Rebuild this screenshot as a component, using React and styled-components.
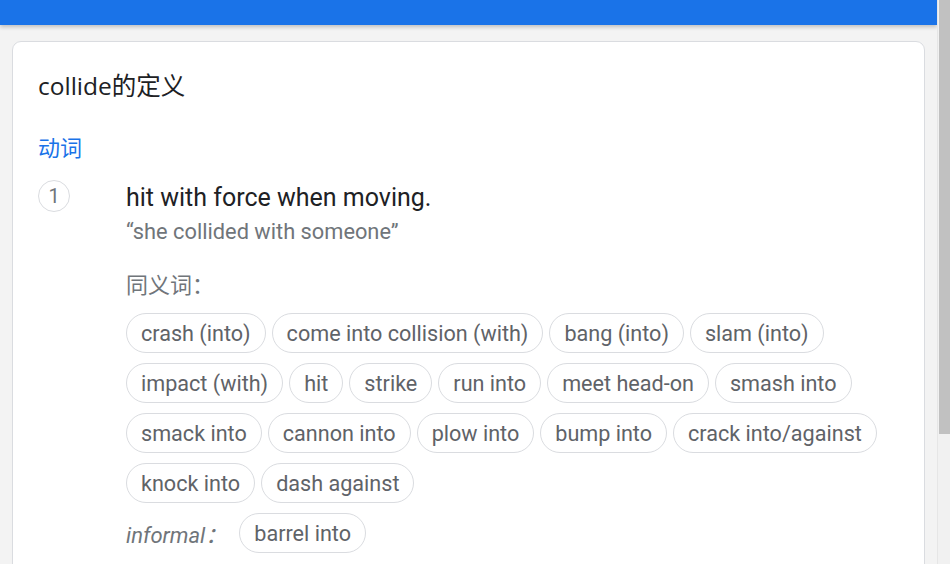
import React from "react";
import styled, { createGlobalStyle } from "styled-components";

const synonyms = [
  "crash (into)",
  "come into collision (with)",
  "bang (into)",
  "slam (into)",
  "impact (with)",
  "hit",
  "strike",
  "run into",
  "meet head-on",
  "smash into",
  "smack into",
  "cannon into",
  "plow into",
  "bump into",
  "crack into/against",
  "knock into",
  "dash against",
];

const informal = ["barrel into"];

export default function App() {
  return (
    <>
      <GlobalStyle />
      <Page>
        <Main>
          <TopBar />
          <Card>
            <Title>collide的定义</Title>
            <PartOfSpeech>动词</PartOfSpeech>
            <Sense>
              <SenseNumber>1</SenseNumber>
              <SenseBody>
                <Definition>hit with force when moving.</Definition>
                <Example>“she collided with someone”</Example>
                <SynonymLabel>同义词：</SynonymLabel>
                <ChipList>
                  {synonyms.map((word) => (
                    <Chip key={word}>{word}</Chip>
                  ))}
                </ChipList>
                <ChipList informal>
                  <RegisterLabel>informal：</RegisterLabel>
                  {informal.map((word) => (
                    <Chip key={word}>{word}</Chip>
                  ))}
                </ChipList>
              </SenseBody>
            </Sense>
          </Card>
        </Main>
        <ScrollTrack>
          <ScrollThumb />
        </ScrollTrack>
      </Page>
    </>
  );
}

const GlobalStyle = createGlobalStyle`
  html, body {
    margin: 0;
    padding: 0;
    height: 100%;
    overflow: hidden;
  }
  body {
    background: #f3f3f3;
    font-family: Roboto, "Noto Sans CJK SC", sans-serif;
  }
`;

const Page = styled.div`
  display: flex;
  height: 100vh;
  overflow: hidden;
`;

const Main = styled.div`
  flex: 1;
  display: flex;
  flex-direction: column;
  min-width: 0;
`;

const TopBar = styled.div`
  flex: none;
  height: 25px;
  background: #1a73e8;
  box-shadow: 0 2px 4px rgba(0, 0, 0, 0.22);
`;

const Card = styled.div`
  margin: 16px 12px 0;
  padding: 28px 25px 40px 25px;
  background: #fff;
  border: 1px solid #dadce0;
  border-radius: 9px;
`;

const Title = styled.div`
  font-family: "Open Sans", "Noto Sans CJK SC", sans-serif;
  font-size: 24.5px;
  line-height: 32px;
  color: #202124;
`;

const PartOfSpeech = styled.div`
  margin-top: 30px;
  font-family: "Noto Sans CJK SC", sans-serif;
  font-size: 22px;
  line-height: 28px;
  color: #1a73e8;
`;

const Sense = styled.div`
  display: flex;
  margin-top: 20px;
`;

const SenseNumber = styled.div`
  flex: none;
  box-sizing: border-box;
  width: 32px;
  height: 32px;
  margin-right: 56px;
  border: 1px solid #dadce0;
  border-radius: 50%;
  display: flex;
  align-items: center;
  justify-content: center;
  font-size: 20px;
  color: #70757a;
`;

const SenseBody = styled.div`
  flex: 1;
  min-width: 0;
`;

const Definition = styled.div`
  margin-top: 2px;
  font-size: 25px;
  line-height: 32px;
  color: #202124;
`;

const Example = styled.div`
  margin-top: 3px;
  font-size: 21.8px;
  line-height: 30px;
  color: #70757a;
`;

const SynonymLabel = styled.div`
  margin-top: 25px;
  font-size: 22px;
  line-height: 28px;
  color: #70757a;
`;

const ChipList = styled.div`
  display: flex;
  flex-wrap: wrap;
  align-items: center;
  gap: 10px 6px;
  margin-top: ${(props) => (props.informal ? "10px" : "13px")};
`;

const Chip = styled.span`
  box-sizing: border-box;
  display: inline-flex;
  align-items: center;
  height: 40px;
  padding: 0 14px;
  border: 1px solid #dadce0;
  border-radius: 20px;
  font-size: 21.6px;
  color: #5f6368;
  white-space: nowrap;
`;

const RegisterLabel = styled.span`
  margin-right: 6px;
  font-size: 22px;
  font-style: italic;
  color: #70757a;
`;

const ScrollTrack = styled.div`
  flex: none;
  box-sizing: border-box;
  width: 13px;
  padding-left: 1px;
  background: #f1f1f1;
  border-left: 1px solid #e6e6e6;
`;

const ScrollThumb = styled.div`
  height: 434px;
  background: #c1c1c1;
`;
